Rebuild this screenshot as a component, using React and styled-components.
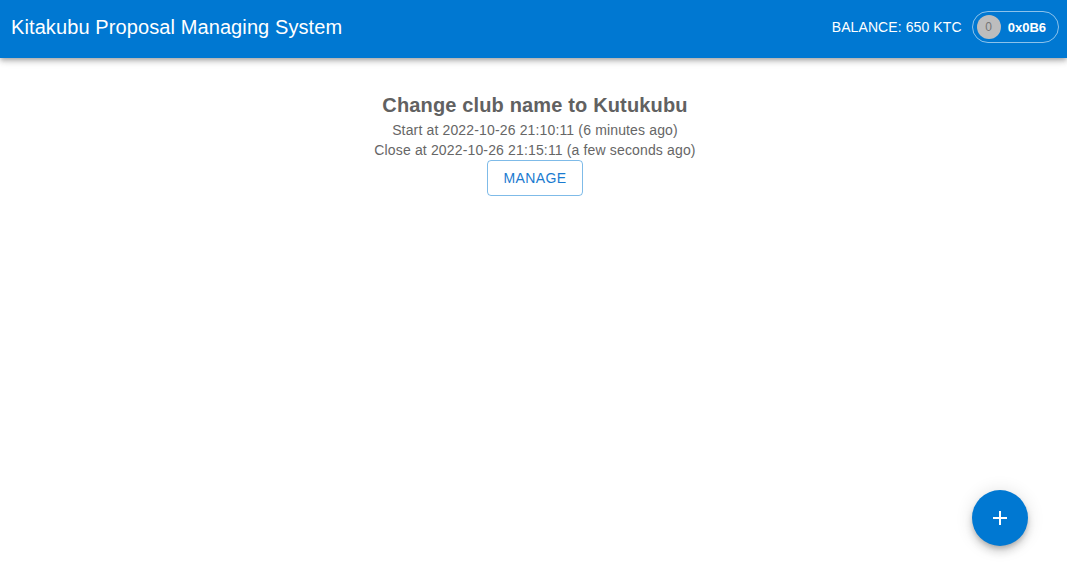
import React from "react";
import styled, { createGlobalStyle } from "styled-components";

const Global = createGlobalStyle`
  html, body { margin: 0; padding: 0; background: #fff; }
  body { font-family: "Liberation Sans", Arial, sans-serif; }
`;

const Page = styled.div`
  min-height: 582px;
  display: flex;
  flex-direction: column;
`;

const AppBar = styled.header`
  height: 58px;
  box-sizing: border-box;
  padding: 0 8px 4px 11px;
  background: #0078d2;
  color: #fff;
  display: flex;
  align-items: center;
  justify-content: space-between;
  box-shadow: 0 2px 4px -1px rgba(0,0,0,0.2), 0 4px 5px 0 rgba(0,0,0,0.14), 0 1px 10px 0 rgba(0,0,0,0.12);
  position: relative;
  z-index: 1;
`;

const Title = styled.h1`
  margin: 0;
  font-size: 20px;
  font-weight: 400;
  letter-spacing: 0.1px;
`;

const Right = styled.div`
  display: flex;
  align-items: center;
  gap: 10px;
`;

const Balance = styled.span`
  font-size: 14px;
  letter-spacing: 0.1px;
`;

const Chip = styled.div`
  height: 32px;
  box-sizing: border-box;
  border: 1px solid rgba(255,255,255,0.55);
  border-radius: 16px;
  display: flex;
  align-items: center;
  padding: 0 12px 0 4px;
  gap: 7px;
`;

const Avatar = styled.span`
  width: 24px;
  height: 24px;
  border-radius: 50%;
  background: #bdbdbd;
  color: #757575;
  font-size: 12px;
  display: flex;
  align-items: center;
  justify-content: center;
`;

const ChipLabel = styled.span`
  font-size: 13px;
  font-weight: 700;
`;

const Main = styled.main`
  display: flex;
  flex-direction: column;
  align-items: center;
  padding: 32px 0 0 3px;
  color: #666;
`;

const ProposalTitle = styled.h2`
  margin: 0;
  font-size: 20px;
  font-weight: 700;
  line-height: 30px;
  letter-spacing: 0.15px;
  color: #616161;
`;

const Line = styled.div`
  font-size: 14px;
  line-height: 20px;
  letter-spacing: 0.15px;
`;

const OutlinedButton = styled.button`
  width: 96px;
  height: 36px;
  border: 1px solid rgba(0,120,210,0.5);
  border-radius: 4px;
  background: transparent;
  color: #1a7bd0;
  font-family: inherit;
  font-size: 14px;
  letter-spacing: 0.4px;
  text-transform: uppercase;
  cursor: pointer;
`;

const Fab = styled.button`
  position: fixed;
  right: 39px;
  bottom: 36px;
  width: 56px;
  height: 56px;
  border-radius: 50%;
  border: none;
  background: #0078d2;
  color: #fff;
  display: flex;
  align-items: center;
  justify-content: center;
  box-shadow: 0 3px 5px -1px rgba(0,0,0,0.2), 0 6px 10px 0 rgba(0,0,0,0.14), 0 1px 18px 0 rgba(0,0,0,0.12);
  cursor: pointer;
`;

export default function App() {
  return (
    <Page>
      <Global />
      <AppBar>
        <Title>Kitakubu Proposal Managing System</Title>
        <Right>
          <Balance>BALANCE: 650 KTC</Balance>
          <Chip>
            <Avatar>0</Avatar>
            <ChipLabel>0x0B6</ChipLabel>
          </Chip>
        </Right>
      </AppBar>
      <Main>
        <ProposalTitle>Change club name to Kutukubu</ProposalTitle>
        <Line>Start at 2022-10-26 21:10:11 (6 minutes ago)</Line>
        <Line>Close at 2022-10-26 21:15:11 (a few seconds ago)</Line>
        <OutlinedButton>Manage</OutlinedButton>
      </Main>
      <Fab aria-label="add">
        <svg width="24" height="24" viewBox="0 0 24 24" fill="#fff">
          <path d="M19 13h-6v6h-2v-6H5v-2h6V5h2v6h6v2z" />
        </svg>
      </Fab>
    </Page>
  );
}
